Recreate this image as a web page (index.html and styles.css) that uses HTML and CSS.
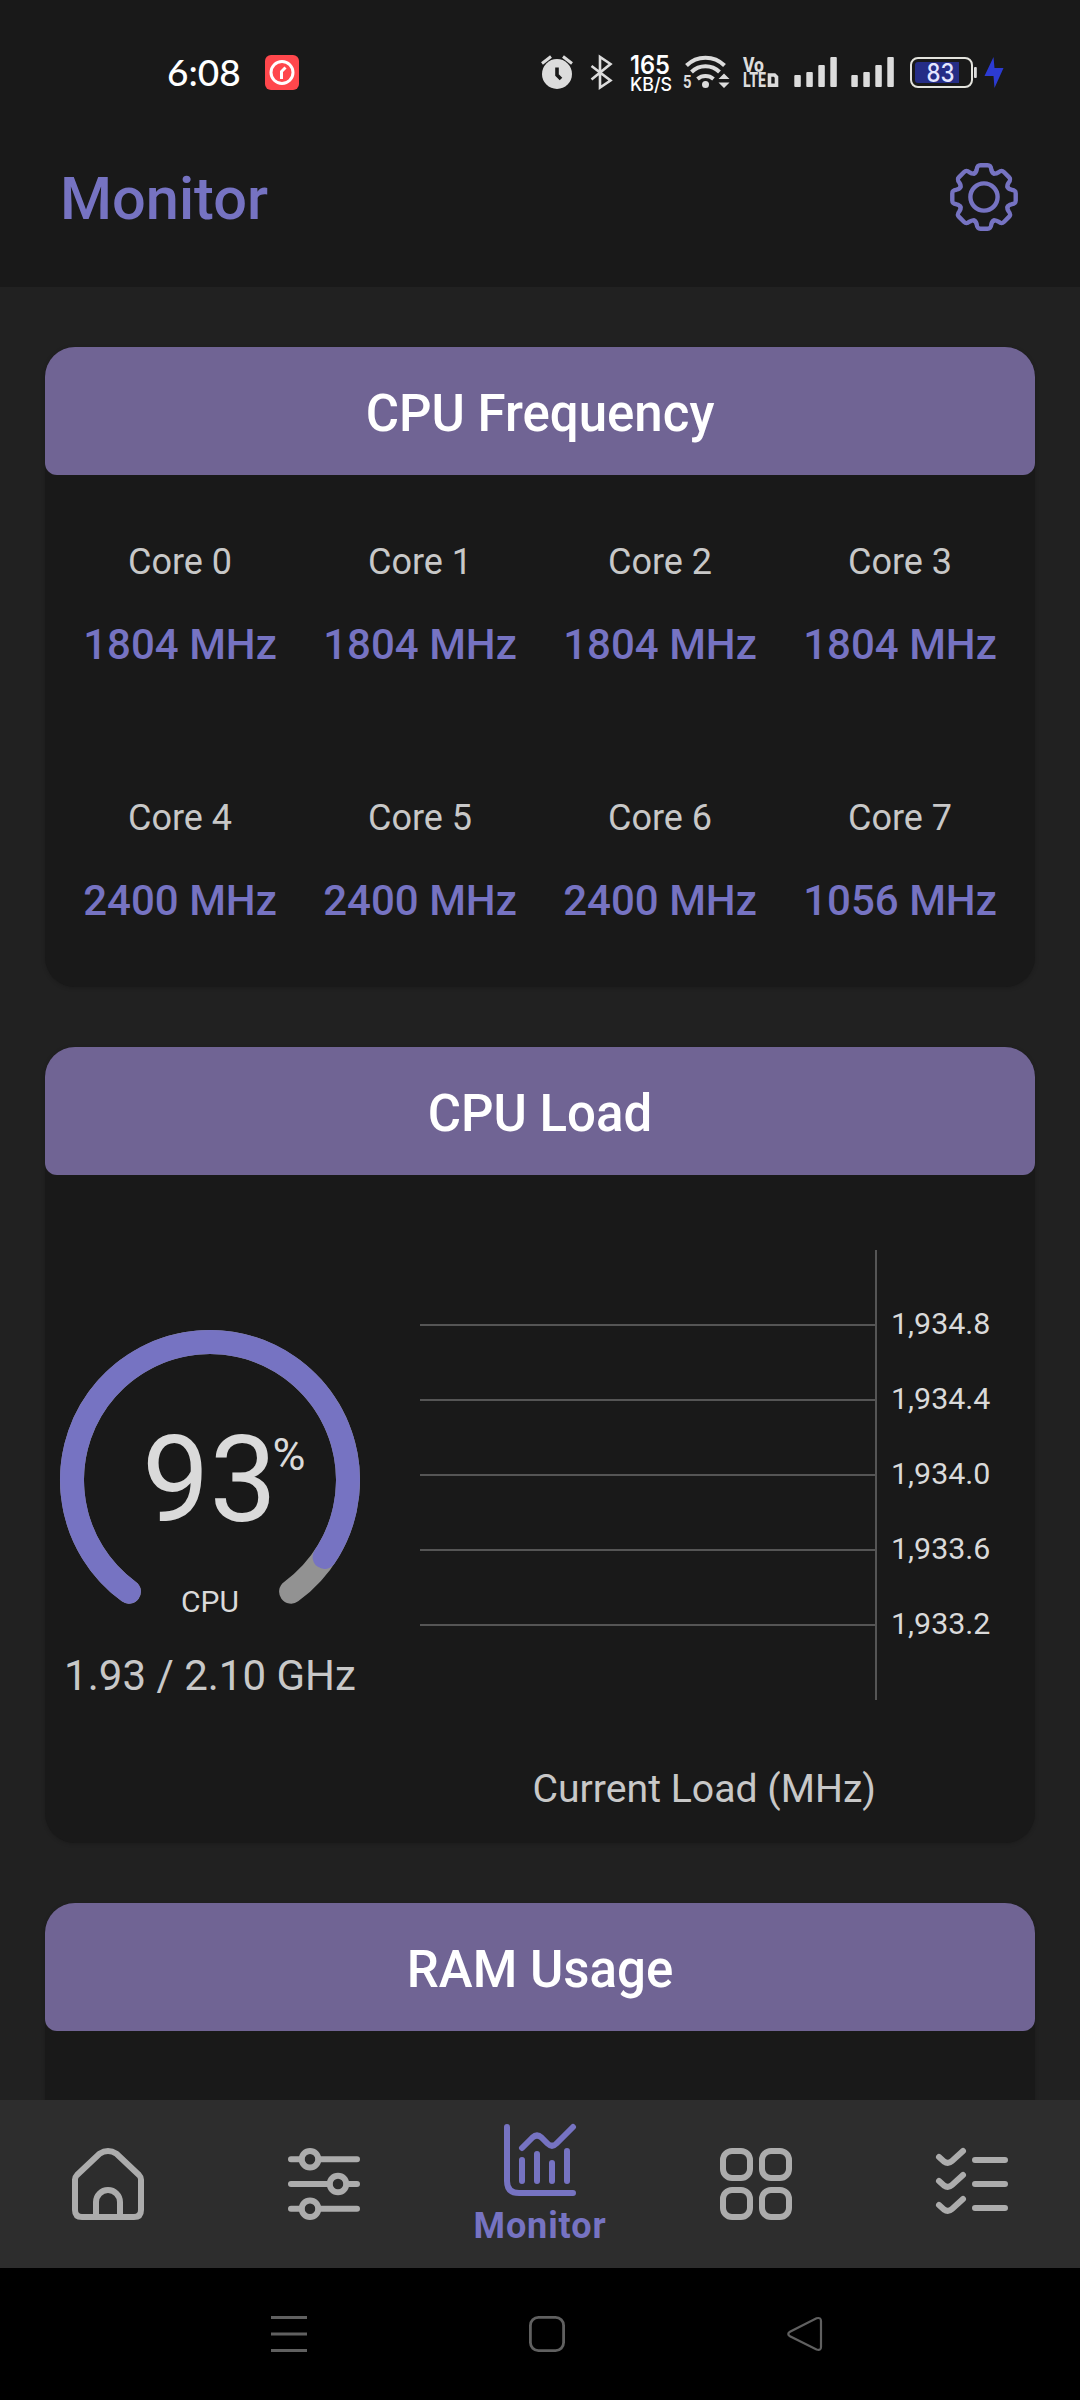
FILE: index.html
```html
<!DOCTYPE html>
<html lang="en">
<head>
<meta charset="utf-8">
<title>Monitor</title>
<link rel="stylesheet" href="styles.css">
</head>
<body>
<div class="screen">
  <header class="top">
    <div class="status">
      <span class="clock">6:08</span>
      <svg class="app-badge" width="34" height="35" viewBox="0 0 34 35">
        <rect width="34" height="35" rx="6" fill="#ff474c"/>
        <circle cx="17" cy="17.500" r="11" fill="none" stroke="#fff" stroke-width="3"/>
        <path d="M16.500 24V16.500L20.500 12.500" fill="none" stroke="#fff" stroke-width="3"/>
      </svg>
      <div class="status-icons">
        <svg width="32" height="38" viewBox="541 54 32 38">
          <circle cx="557" cy="74" r="15" fill="#dcdcdc"/>
          <path d="M542 63.500L551 56.500M572 63.500L563 56.500" stroke="#dcdcdc" stroke-width="3"/>
          <path d="M557 67.500V75L561 79" fill="none" stroke="#191919" stroke-width="3.600"/>
        </svg>
        <svg class="s-bt" width="22" height="38" viewBox="591 54 22 38">
          <path d="M591.500 66L610.500 80.500L600 87.500V57L610.500 64L591.500 79.500" fill="none" stroke="#dcdcdc" stroke-width="2.600"/>
        </svg>
        <svg class="s-rate" width="42" height="38" viewBox="630 54 42 38">
          <text x="630" y="73.500" class="rate-a" textLength="40" lengthAdjust="spacingAndGlyphs">165</text>
          <text x="630" y="91" class="rate-b" textLength="42" lengthAdjust="spacingAndGlyphs">KB/S</text>
        </svg>
        <svg class="s-wifi" width="47" height="38" viewBox="683 54 47 38">
          <g fill="none" stroke="#dcdcdc" stroke-width="4">
            <path d="M686.500 65.500A27 27 0 0 1 724.500 65.500"/>
            <path d="M691.500 72A20 20 0 0 1 719.500 72"/>
            <path d="M697.500 79A12.500 12.500 0 0 1 713.500 79"/>
          </g>
          <circle cx="705.500" cy="84.500" r="3.500" fill="#dcdcdc"/>
          <path d="M718.500 79L724 73.500L729.500 79ZM718.500 82.500L724 88L729.500 82.500Z" fill="#dcdcdc"/>
          <text x="683" y="88" class="band" textLength="8.500" lengthAdjust="spacingAndGlyphs">5</text>
        </svg>
        <svg class="s-volte" width="36" height="38" viewBox="743 54 36 38">
          <text x="743" y="71.500" class="volte" textLength="21" lengthAdjust="spacingAndGlyphs">Vo</text>
          <text x="743" y="87" class="volte" textLength="23" lengthAdjust="spacingAndGlyphs">LTE</text>
          <path d="M769.500 75H774.500L776.500 77V85.300H769.500Z" fill="none" stroke="#dcdcdc" stroke-width="3.600"/>
        </svg>
        <svg class="s-sig" width="43" height="38" viewBox="794 54 43 38" fill="#dcdcdc">
          <rect x="794.300" y="75" width="6.500" height="12" rx="1"/><rect x="806.300" y="72" width="6.500" height="15" rx="1"/><rect x="818.300" y="65" width="6.500" height="22" rx="1"/><rect x="830.300" y="57" width="6.500" height="30" rx="1"/>
        </svg>
        <svg class="s-sig2" width="43" height="38" viewBox="794 54 43 38" fill="#dcdcdc">
          <rect x="794.300" y="75" width="6.500" height="12" rx="1"/><rect x="806.300" y="72" width="6.500" height="15" rx="1"/><rect x="818.300" y="65" width="6.500" height="22" rx="1"/><rect x="830.300" y="57" width="6.500" height="30" rx="1"/>
        </svg>
        <svg class="s-batt" width="68" height="38" viewBox="910 54 68 38">
          <rect x="911" y="58" width="61" height="29" rx="7" fill="none" stroke="#e3e3dd" stroke-width="2"/>
          <path d="M918 62H959V83H918Q915 83 915 80V65Q915 62 918 62Z" fill="#252d86"/>
          <rect x="974" y="67" width="2.800" height="11" rx="1" fill="#dcdcdc"/>
          <text x="926.500" y="81.500" class="batt" textLength="28" lengthAdjust="spacingAndGlyphs">83</text>
        </svg>
        <svg class="s-bolt" width="20" height="38" viewBox="984 54 20 38">
          <path d="M993.500 57L984.500 76H993.500L994.500 88L1003.500 68H994.500Z" fill="#2c3bd2"/>
        </svg>
      </div>
    </div>
    <div class="appbar">
      <h1>Monitor</h1>
      <svg width="70" height="70" viewBox="-35 -35 70 70" fill="none" stroke="#7673c2" stroke-width="4.400" stroke-linecap="round">
        <defs><path id="tooth" d="M-9.800-23.600C-8-24.350-7.700-25.500-7.300-27.500C-6.900-30.500-6.400-31.700-3.600-31.700H3.600C6.400-31.700 6.900-30.500 7.300-27.500C7.700-25.500 8-24.350 9.800-23.600"/></defs>
        <circle r="13.600"/>
        <use href="#tooth"/><use href="#tooth" transform="rotate(45)"/><use href="#tooth" transform="rotate(90)"/><use href="#tooth" transform="rotate(135)"/><use href="#tooth" transform="rotate(180)"/><use href="#tooth" transform="rotate(225)"/><use href="#tooth" transform="rotate(270)"/><use href="#tooth" transform="rotate(315)"/>
      </svg>
    </div>
  </header>

  <main class="content">
    <section class="card">
      <h2>CPU Frequency</h2>
      <div class="cores">
        <div class="core"><span>Core 0</span><b>1804 MHz</b></div>
        <div class="core"><span>Core 1</span><b>1804 MHz</b></div>
        <div class="core"><span>Core 2</span><b>1804 MHz</b></div>
        <div class="core"><span>Core 3</span><b>1804 MHz</b></div>
        <div class="core"><span>Core 4</span><b>2400 MHz</b></div>
        <div class="core"><span>Core 5</span><b>2400 MHz</b></div>
        <div class="core"><span>Core 6</span><b>2400 MHz</b></div>
        <div class="core"><span>Core 7</span><b>1056 MHz</b></div>
      </div>
    </section>

    <section class="card">
      <h2>CPU Load</h2>
      <div class="load">
        <div class="gauge">
          <svg width="300" height="300" viewBox="-150 -150 300 300">
            <g fill="none" stroke-width="24" stroke-linecap="round">
              <path d="M-81.110 111.640A138 138 0 1 1 81.110 111.640" stroke="#929292"/>
              <path d="M-81.110 111.640A138 138 0 1 1 114.610 76.860" stroke="#7673c2"/>
            </g>
            <text class="pct" x="-68" y="41">93</text>
            <text class="sign" x="62.500" y="-10">%</text>
            <text class="glabel" x="0" y="132" text-anchor="middle">CPU</text>
          </svg>
          <p class="ghz">1.93 / 2.10 GHz</p>
        </div>
        <div class="chart">
          <svg width="580" height="450" viewBox="420 1250 580 450">
            <path d="M420 1325H876M420 1400H876M420 1475H876M420 1550H876M420 1625H876M876 1250V1700" stroke="#555" stroke-width="2"/>
            <g class="ticks">
              <text x="891" y="1333.500">1,934.8</text>
              <text x="891" y="1408.500">1,934.4</text>
              <text x="891" y="1483.500">1,934.0</text>
              <text x="891" y="1558.500">1,933.6</text>
              <text x="891" y="1633.500">1,933.2</text>
            </g>
          </svg>
          <p class="caption">Current Load (MHz)</p>
        </div>
      </div>
    </section>

    <section class="card">
      <h2>RAM Usage</h2>
      <div class="ram"></div>
    </section>
  </main>

  <nav class="tabs">
    <div class="tab">
      <svg width="72" height="72" viewBox="0 0 72 72">
        <path d="M3 31.500Q3 29 5 27L27.500 5.800Q36 0.200 44.500 5.800L67 27Q69 29 69 31.500V62Q69 69 62 69H10Q3 69 3 62ZM24 69V54A12 12 0 0 1 48 54V69"/>
      </svg>
    </div>
    <div class="tab">
      <svg width="72" height="72" viewBox="0 0 72 72">
        <path d="M3 11.300H13.500M30.500 11.300H69M3 36H41.500M58.500 36H69M3 60.700H13.500M30.500 60.700H69"/>
        <circle cx="22" cy="11.300" r="8.300"/><circle cx="50" cy="36" r="8.300"/><circle cx="22" cy="60.700" r="8.300"/>
      </svg>
    </div>
    <div class="tab active">
      <svg width="72" height="72" viewBox="0 0 72 72">
        <path d="M3 3V57Q3 69 15 69H69M18 36V57M33 30V57M48 39V57M63 27V57M18 24L28.500 13.500Q33 9.500 37.500 13.500L43.500 19.500Q48 24 52.500 19.500L69 3"/>
      </svg>
      <span>Monitor</span>
    </div>
    <div class="tab">
      <svg width="72" height="72" viewBox="0 0 72 72">
        <rect x="3" y="3" width="27" height="27" rx="9"/><rect x="42" y="3" width="27" height="27" rx="9"/><rect x="3" y="42" width="27" height="27" rx="9"/><rect x="42" y="42" width="27" height="27" rx="9"/>
      </svg>
    </div>
    <div class="tab">
      <svg width="72" height="72" viewBox="0 0 72 72">
        <path d="M3 9L8 13.500Q12 16.500 16 13L27 3M3 33L8 37.500Q12 40.500 16 37L27 27M3 57L8 61.500Q12 64.500 16 61L27 51M39 12H69M39 36H69M39 60H69"/>
      </svg>
    </div>
  </nav>

  <footer class="sysbar">
    <svg width="36" height="36" viewBox="0 0 36 36"><path d="M0 1.500H36M0 18H36M0 34.500H36"/></svg>
    <svg width="36" height="36" viewBox="0 0 36 36"><rect x="1.400" y="1.400" width="33.200" height="33.200" rx="8"/></svg>
    <svg width="36" height="36" viewBox="0 0 36 36"><path d="M34 5V31Q34 35 29.500 33.500L3 20.200Q-0.500 18 3 15.800L29.500 2.300Q34 1 34 5Z" stroke-width="2.200"/></svg>
  </footer>
</div>
</body>
</html>
```
FILE: styles.css
```css
* { box-sizing: border-box; margin: 0; padding: 0; }
body { background: #212121; font-family: Roboto, sans-serif; }
svg { display: block; flex: none; overflow: visible; }

.screen { width: 1080px; height: 2400px; display: flex; flex-direction: column; overflow: hidden; }

.top { flex: none; height: 287px; background: #191919; }
.status { height: 110px; display: flex; align-items: flex-start; padding: 54px 76px 0 167px; }
.clock { font: 500 37px/36px Lato, sans-serif; color: #fff; width: 98px; }
.app-badge { margin-top: 1px; }
.status-icons { display: flex; margin-left: auto; }
.s-bt { margin-left: 18px; }
.s-rate { margin-left: 17px; }
.s-wifi { margin-left: 11px; }
.s-volte { margin-left: 13px; }
.s-sig { margin-left: 15px; }
.s-sig2 { margin-left: 14px; }
.s-batt { margin-left: 16px; }
.s-bolt { margin-left: 6px; }
.rate-a { font: 600 25px Inter, sans-serif; fill: #fff; }
.rate-b { font: 500 18.5px Inter, sans-serif; fill: #fff; }
.band { font: 700 18px Roboto, sans-serif; fill: #dcdcdc; }
.volte { font: 800 20px Roboto, sans-serif; fill: #dcdcdc; }
.batt { font: 500 25px Inter, sans-serif; fill: #e4e6ff; }

.appbar { height: 177px; display: flex; align-items: center; justify-content: space-between; padding: 0 61px 3px 60px; }
.appbar h1 { font-size: 59.5px; line-height: 70px; font-weight: 500; color: #7673c2; padding-top: 4px; }

.content { flex: 1; min-height: 0; overflow: hidden; padding: 60px 45px 0; display: flex; flex-direction: column; gap: 60px; }
.card { flex: none; background: #191919; border-radius: 30px; box-shadow: 0 1px 4px rgba(0, 0, 0, .2); }
.card h2 { height: 128px; padding-top: 6px; line-height: 122px; text-align: center; font-size: 51px; font-weight: 500; color: #fff; background: #706494; border-radius: 30px 30px 12px 12px; }

.cores { height: 512px; padding: 0 15px; display: grid; grid-template-columns: repeat(4, 240px); grid-auto-rows: 256px; }
.core { display: flex; flex-direction: column; align-items: center; gap: 37px; padding-top: 66px; }
.core span { font-size: 36px; line-height: 42px; color: #c8c8c8; }
.core b { font-size: 42px; line-height: 50px; font-weight: 500; color: #7673c2; white-space: nowrap; }

.load { height: 668px; display: flex; gap: 60px; padding: 75px 0 0 15px; }
.gauge { width: 300px; padding-top: 80px; }
.pct { font-size: 120px; fill: #dadada; }
.sign { font-size: 45px; fill: #dadada; }
.glabel { font-size: 30px; fill: #dadada; }
.ghz { margin-top: 21px; text-align: center; font-size: 42px; line-height: 50px; color: #c8c8c8; white-space: nowrap; }
.ticks { font-size: 30.4px; fill: #dadada; }
.caption { width: 456px; margin-top: 65px; text-align: right; font-size: 39.2px; line-height: 48px; color: #c8c8c8; }
.ram { height: 300px; }

.tabs { flex: none; height: 168px; background: #2d2d2d; display: grid; grid-template-columns: repeat(5, 1fr); }
.tab { display: flex; flex-direction: column; align-items: center; justify-content: center; color: #acacac; }
.tab svg { fill: none; stroke: currentColor; stroke-width: 6; stroke-linecap: round; stroke-linejoin: round; }
.tab.active { color: #7673c2; justify-content: flex-start; padding-top: 24px; }
.tab span { margin-top: 9px; font: 700 36px/42px Roboto, sans-serif; letter-spacing: .9px; }

.sysbar { flex: none; height: 132px; background: #000; display: flex; align-items: center; gap: 222px; padding-left: 271px; }
.sysbar svg { fill: none; stroke: #606060; stroke-width: 2.800; }
```
